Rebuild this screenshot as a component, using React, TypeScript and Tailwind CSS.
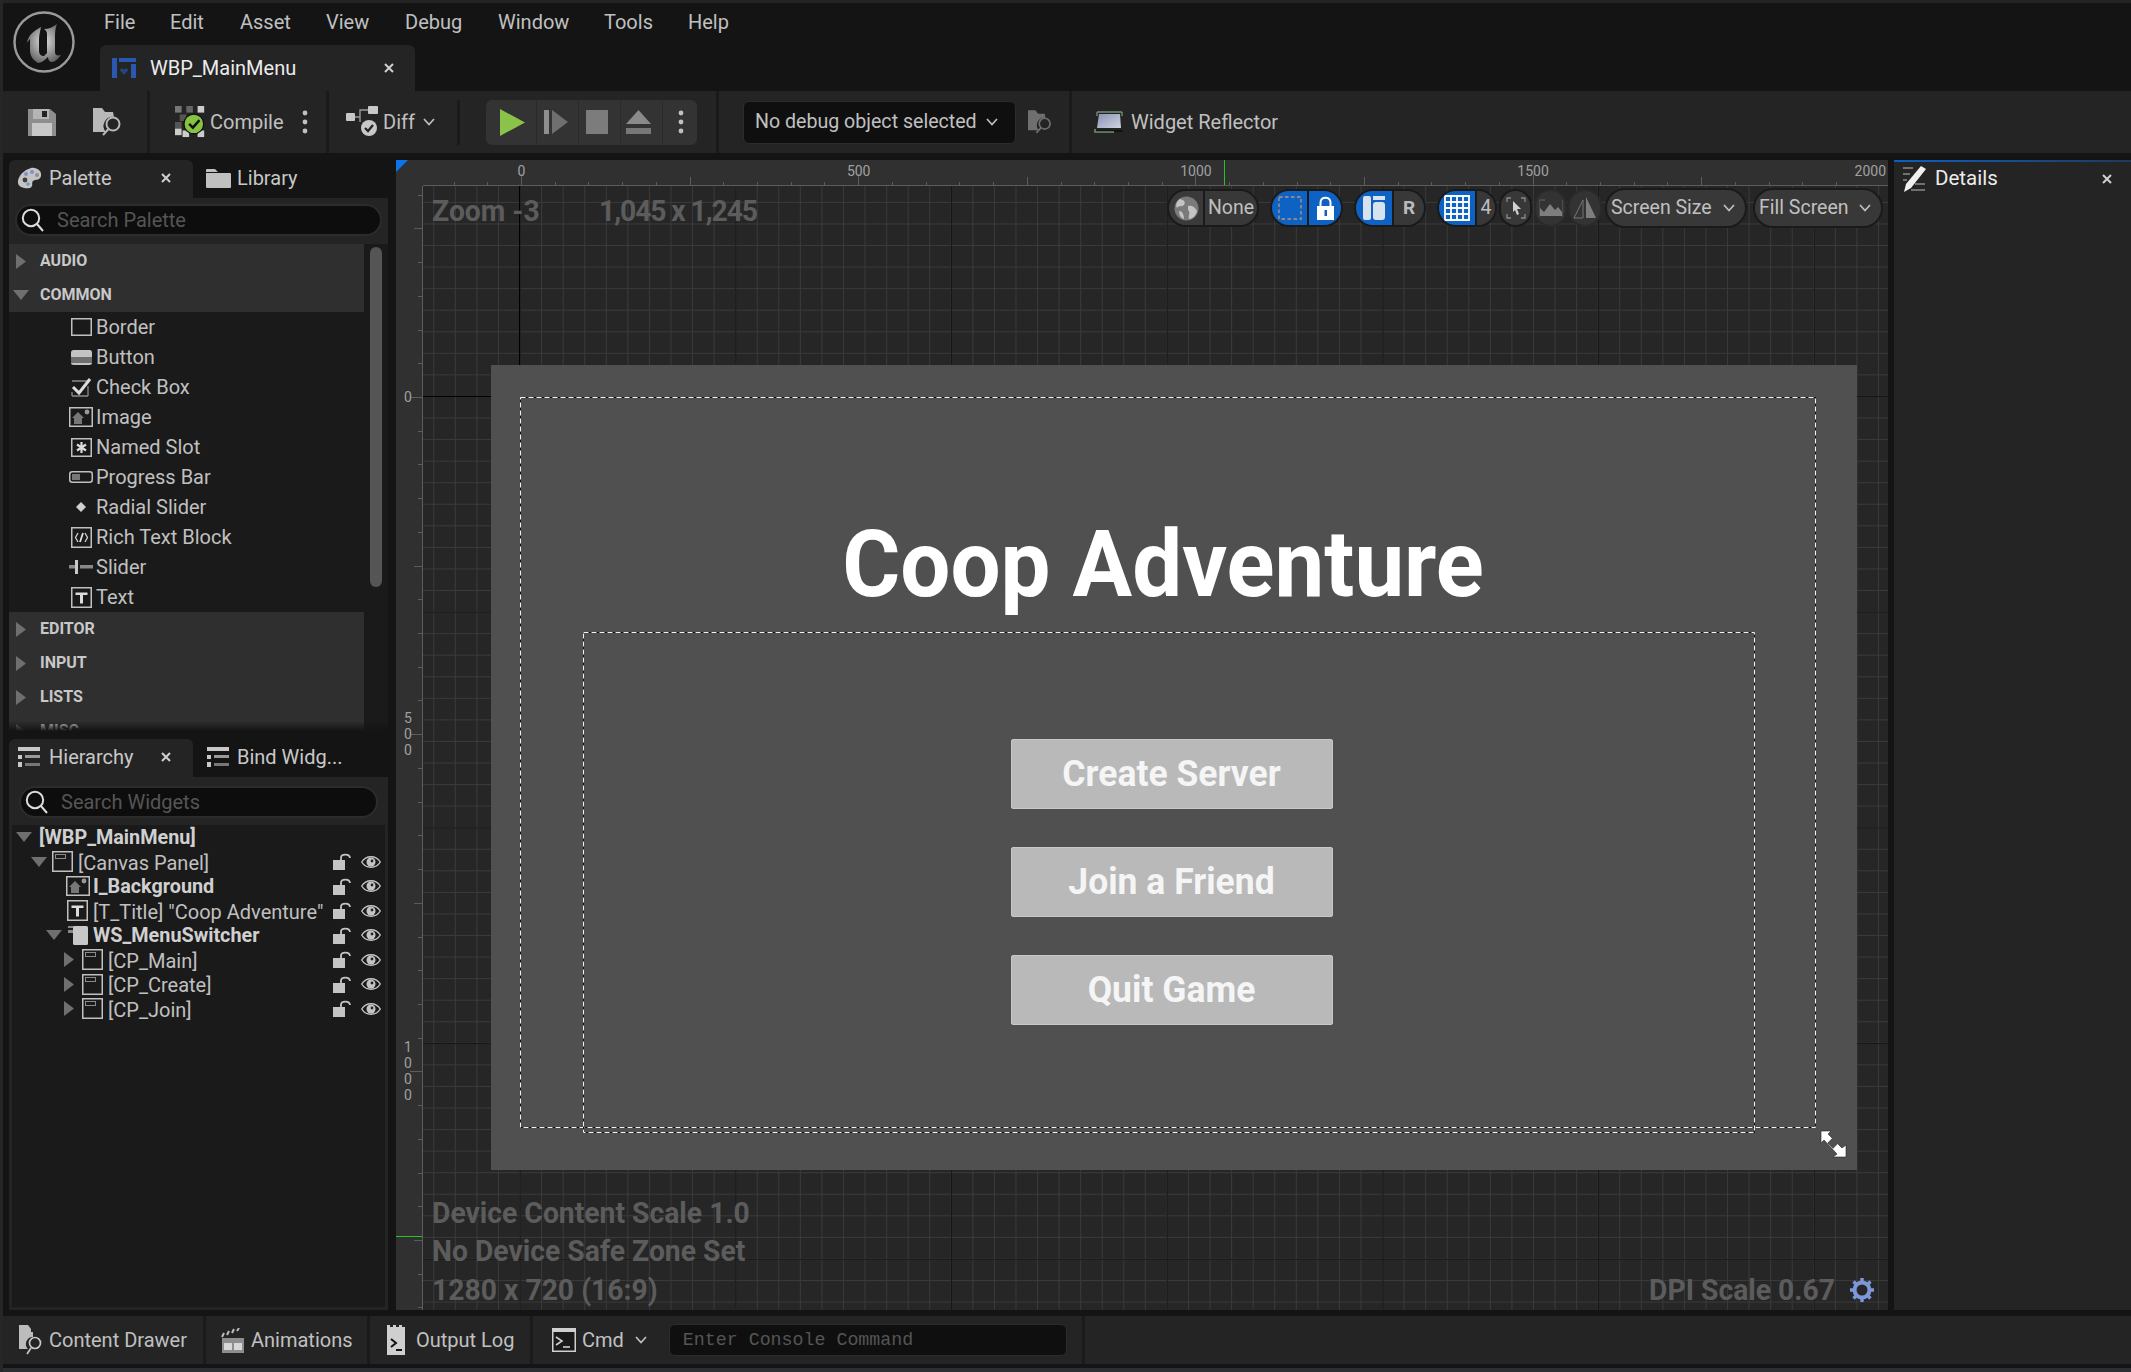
import React from 'react';

type P = { className?: string };
const G = '#c0c0c0';

const Chev = ({ className = '' }: P) => (
  <svg width="12" height="8" viewBox="0 0 12 8" className={className}><polyline points="1,1 6,6.5 11,1" fill="none" stroke="#c0c0c0" strokeWidth="1.7" /></svg>
);
const Close = ({ className = '' }: P) => (
  <svg width="10" height="10" viewBox="0 0 10 10" className={className}><path d="M1 1L9 9M9 1L1 9" stroke="#d0d0d0" strokeWidth="2" /></svg>
);
const Dots = ({ className = '' }: P) => (
  <svg width="6" height="24" viewBox="0 0 6 24" className={className}><circle cx="3" cy="3" r="2.4" fill="#c0c0c0" /><circle cx="3" cy="12" r="2.4" fill="#c0c0c0" /><circle cx="3" cy="21" r="2.4" fill="#c0c0c0" /></svg>
);
const Logo = () => (
  <svg width="64" height="64" viewBox="0 0 64 64">
    <defs><radialGradient id="lg" cx="0.5" cy="0.45" r="0.6"><stop offset="0" stopColor="#e0e0e0" /><stop offset="1" stopColor="#5f5f5f" /></radialGradient></defs>
    <circle cx="32" cy="32" r="29.5" fill="none" stroke="#9a9a9a" strokeWidth="2.4" />
    <path d="M15 33C16 25 22 21 29 17C28 22 27 25 27 30L27 41C27 44 29 46 32 46L35 43L35 24C35 22 34 20 32 19C37 19 41 17 45 14C43 19 43 23 43 28L43 42C43 45 45 46 49 45C46 49 43 52 40 52C38 52 36 50 36 47C33 50 29 53 26 53C21 50 18 46 18 40L18 29C17 30 16 31 15 33Z" fill="url(#lg)" />
  </svg>
);
const BlueprintIcon = () => (
  <svg width="24" height="20" viewBox="0 0 24 20">
    <path d="M0 0H5V20H0ZM7 0H24V4H7ZM19 6H24V20H19Z" fill="#2a57b0" />
    <path d="M12 17L8 12.5C8 10 11 10 12 12C13 10 16 10 16 12.5Z" fill="#24447f" />
  </svg>
);
const Save = () => (
  <svg width="28" height="27" viewBox="0 0 28 27">
    <path d="M0 0H22L28 5V27H0Z" fill="#8e8e8e" /><rect x="5" y="0" width="16" height="10" fill="#b5b5b5" /><rect x="14" y="2" width="5" height="6" fill="#222" /><rect x="4" y="14" width="20" height="13" fill="#c8c8c8" />
  </svg>
);
const FolderFind = ({ c = '#b8b8b8', w = 30, h = 28 }: { c?: string; w?: number; h?: number }) => (
  <svg width={w} height={h} viewBox="0 0 30 28">
    <path d="M0 0H9L12 4H20L21 9A9 9 0 0 0 13 24H0Z" fill={c} />
    <circle cx="20" cy="16" r="6.5" fill="none" stroke={c} strokeWidth="2" /><path d="M15.5 21L10 27" stroke={c} strokeWidth="2" />
  </svg>
);
const CompileIcon = () => (
  <svg width="32" height="32" viewBox="0 0 34 34">
    {[[0, 0, '#777'], [12, 0, '#666'], [24, 0, '#ccc'], [5, 9, '#555'], [0, 17, '#555'], [0, 24, '#ccc'], [8, 26, '#ccc'], [24, 26, '#ccc']].map(([x, y, c], i) => (
      <rect key={i} x={x as number} y={y as number} width="7" height="7" fill={c as string} />
    ))}
    <circle cx="20" cy="19" r="10.5" fill="#86c440" stroke="#111" strokeWidth="1.4" />
    <path d="M15 19L19 23L26 15" fill="none" stroke="#111" strokeWidth="2.6" />
  </svg>
);
const DiffIcon = () => (
  <svg width="34" height="32" viewBox="0 0 34 32">
    <rect x="0" y="7" width="9" height="8" rx="1" fill="#c8c8c8" /><rect x="22" y="0" width="10" height="8" rx="1" fill="#c8c8c8" />
    <path d="M9 11H14V4H22M14 11V16" fill="none" stroke="#999" strokeWidth="1.4" />
    <circle cx="23" cy="22" r="8" fill="#c8c8c8" /><path d="M19 22L22 25L27 19" fill="none" stroke="#222" strokeWidth="2.2" />
  </svg>
);
const Reflector = () => (
  <svg width="30" height="24" viewBox="0 0 30 24">
    <defs><linearGradient id="rf" x1="0" y1="0" x2="1" y2="1"><stop offset="0" stopColor="#8b93b8" /><stop offset="1" stopColor="#d0d4de" /></linearGradient></defs>
    <path d="M3 2H28" stroke="#6c9070" strokeWidth="1.6" /><path d="M3 2V6M28 2V6" stroke="#6c9070" strokeWidth="1.4" />
    <path d="M5 4H26L27 18H3Z" fill="url(#rf)" />
    <path d="M1 20H29L28 22H2Z" fill="#111" /><path d="M1 19V22H20" fill="none" stroke="#6c9070" strokeWidth="1.6" />
  </svg>
);
const PaletteIcon = () => (
  <svg width="25" height="22" viewBox="0 0 25 22">
    <path d="M14 1C20 0 25 4 24 9C23 14 18 12 16 14C14 16 17 19 13 21C7 22 0 20 1 14C2 8 7 3 14 1Z" fill="#c4c4c4" />
    <circle cx="8" cy="13" r="2.4" fill="#3d3d3d" /><circle cx="9" cy="7" r="2" fill="#7b93c9" /><circle cx="15" cy="5" r="2" fill="#7b93c9" /><circle cx="20" cy="8" r="2" fill="#8f8f8f" /><circle cx="11" cy="17" r="1.8" fill="#7b93c9" />
  </svg>
);
const Folder = () => (
  <svg width="25" height="19" viewBox="0 0 25 19"><path d="M0 1C0 0 1 0 1 0H9L12 3H0ZM0 4H24C25 4 25 5 25 5V18C25 19 24 19 24 19H1C0 19 0 18 0 18Z" fill="#c0c0c0" /></svg>
);
const ListIcon = () => (
  <svg width="22" height="20" viewBox="0 0 22 20">
    <rect x="0" y="0" width="22" height="4" fill="#c8c8c8" /><rect x="0" y="8" width="4" height="4" fill="#c8c8c8" /><rect x="7" y="8" width="15" height="3" fill="#999" /><rect x="0" y="15" width="4" height="5" fill="#c8c8c8" /><rect x="7" y="16" width="15" height="3" fill="#777" />
  </svg>
);
const Search = () => (
  <svg width="23" height="24" viewBox="0 0 23 24"><circle cx="10" cy="10" r="8.2" fill="none" stroke="#dcdcdc" strokeWidth="2" /><path d="M16 16L22 23" stroke="#dcdcdc" strokeWidth="2" /></svg>
);
const TriR = ({ c = '#6f6f6f', w = 10, h = 15 }: { c?: string; w?: number; h?: number }) => (
  <svg width={w} height={h} viewBox="0 0 10 15"><polygon points="0,0 10,7.5 0,15" fill={c} /></svg>
);
const TriD = ({ c = '#6f6f6f' }: { c?: string }) => (
  <svg width="16" height="10" viewBox="0 0 16 10"><polygon points="0,0 16,0 8,10" fill={c} /></svg>
);

const Box = ({ children, w = 21, h = 18 }: { children?: React.ReactNode; w?: number; h?: number }) => (
  <svg width={w} height={h} viewBox={`0 0 ${w} ${h}`}><rect x="0.75" y="0.75" width={w - 1.5} height={h - 1.5} fill="none" stroke={G} strokeWidth="1.5" />{children}</svg>
);
const BorderI = () => <Box />;
const ButtonI = () => (
  <svg width="21" height="15" viewBox="0 0 21 15"><rect width="21" height="15" rx="2.5" fill="#c4c4c4" /><rect x="0" y="7" width="21" height="6" fill="#6f6f6f" /></svg>
);
const CheckI = () => (
  <svg width="21" height="19" viewBox="0 0 21 19">
    <path d="M1 3H17M1 18H17M1 14V18M17 8V18" fill="none" stroke="#8a8a8a" strokeWidth="1.3" /><path d="M2 9L8 15L19 1" fill="none" stroke="#dcdcdc" strokeWidth="3" />
  </svg>
);
const ImageI = ({ s = 24 }: { s?: number }) => (
  <svg width={s} height={s - 4} viewBox="0 0 24 20">
    <rect x="0.75" y="0.75" width="22.5" height="18.5" fill="none" stroke={G} strokeWidth="1.5" />
    <path d="M3 11L9 5L15 11H13V17H5V11Z" fill="#777" /><circle cx="18" cy="5" r="2.4" fill="#999" />
  </svg>
);
const SlotI = () => (
  <Box w={21} h={19}><path d="M10.5 4V15M6 6.5L15 12.5M15 6.5L6 12.5" stroke="#dcdcdc" strokeWidth="2.2" /></Box>
);
const ProgressI = () => (
  <svg width="24" height="12" viewBox="0 0 24 12"><rect x="0.75" y="0.75" width="22.5" height="10.5" rx="2.5" fill="none" stroke={G} strokeWidth="1.5" /><rect x="3" y="3" width="8" height="6" fill="#777" /></svg>
);
const RadialI = () => <svg width="10" height="10" viewBox="0 0 10 10"><polygon points="5,0 10,5 5,10 0,5" fill="#d0d0d0" /></svg>;
const RichI = () => (
  <Box w={21} h={21}><path d="M7 6L4.5 10.5L7 15M14 6L16.5 10.5L14 15" fill="none" stroke="#d0d0d0" strokeWidth="1.3" /><path d="M9 15L12 6" stroke="#e0e0e0" strokeWidth="1.8" /></Box>
);
const SliderI = () => (
  <svg width="24" height="14" viewBox="0 0 24 14"><rect x="0" y="5" width="6" height="3.5" fill="#888" /><rect x="6" y="0" width="3" height="14" fill="#c8c8c8" /><rect x="11" y="5" width="13" height="3.5" fill="#888" /></svg>
);
const TextI = ({ w = 21, h = 21 }: { w?: number; h?: number }) => (
  <Box w={w} h={h}><path d={`M${w / 2 - 6} ${h / 2 - 5}H${w / 2 + 6}V${h / 2 - 2.5}H${w / 2 + 1.5}V${h / 2 + 6}H${w / 2 - 1.5}V${h / 2 - 2.5}H${w / 2 - 6}Z`} fill="#dcdcdc" /></Box>
);
const PanelI = () => (
  <Box w={21} h={21}><rect x="3.5" y="3.5" width="10" height="4" fill="none" stroke="#8a8a8a" strokeWidth="1" /></Box>
);
const SwitcherI = () => (
  <svg width="20" height="19" viewBox="0 0 20 19"><rect x="0" y="4" width="6" height="3" fill="#888" /><rect x="0" y="0" width="6" height="2" fill="#888" /><rect x="5" y="0" width="15" height="19" rx="1.5" fill="#c8c8c8" /></svg>
);
const Lock = () => (
  <svg width="18" height="17" viewBox="0 0 18 17"><rect x="0" y="7" width="12" height="10" fill="#c4c4c4" /><path d="M8 7V4.5C8 1 16.5 0 17 5" fill="none" stroke="#c4c4c4" strokeWidth="1.8" /></svg>
);
const Eye = () => (
  <svg width="20" height="14" viewBox="0 0 20 14"><path d="M0.7 7C5 0 15 0 19.3 7C15 14 5 14 0.7 7Z" fill="none" stroke="#c4c4c4" strokeWidth="1.4" /><circle cx="10" cy="7" r="4.5" fill="#c4c4c4" /><circle cx="11" cy="6" r="1.4" fill="#222" /></svg>
);
const Globe = () => (
  <svg width="25" height="25" viewBox="0 0 25 25"><circle cx="12.5" cy="12.5" r="12" fill="#7a7a7a" /><path d="M6 3C10 4 12 6 10 9C8 11 5 9 3 12C1 9 3 5 6 3ZM14 10C18 9 21 11 23 15C22 20 18 23 15 23C14 19 17 17 14 14ZM5 15C8 15 10 18 10 23C7 22 5 19 5 15Z" fill="#c4c4c4" /></svg>
);
const SafeZone = () => (
  <svg width="24" height="24" viewBox="0 0 24 24"><rect x="1" y="1" width="22" height="22" fill="none" stroke="#8a8a8a" strokeWidth="1.8" strokeDasharray="3.5 2.5" /></svg>
);
const LockClosed = () => (
  <svg width="17" height="24" viewBox="0 0 17 24"><path d="M3.5 11V6.5C3.5 0 13.5 0 13.5 6.5V11" fill="none" stroke="#fff" strokeWidth="2" /><rect x="0" y="10" width="17" height="14" fill="#fff" /><rect x="7.5" y="14" width="2.5" height="6" fill="#0d62c4" /></svg>
);
const Respect = () => (
  <svg width="22" height="24" viewBox="0 0 22 24"><rect x="0" y="0" width="8" height="24" rx="2" fill="#d8e2ee" /><rect x="10" y="0" width="12" height="4" fill="#d8e2ee" /><rect x="10" y="6" width="12" height="18" rx="3" fill="#d8e2ee" /></svg>
);
const GridI = () => (
  <svg width="26" height="26" viewBox="0 0 26 26"><path d="M1 1H25V25H1ZM1 7H25M1 13H25M1 19H25M7 1V25M13 1V25M19 1V25" fill="none" stroke="#fff" strokeWidth="1.8" /></svg>
);
const Cursor = () => (
  <svg width="20" height="22" viewBox="0 0 20 22"><path d="M1 5V1H5M15 1H19V5M1 17V21H5M15 21H19V17" fill="none" stroke="#8a8a8a" strokeWidth="1.3" /><path d="M7 4L15 12H11L13 17L11 18L9 13L7 15Z" fill="#d0d0d0" /></svg>
);
const Mountain = () => (
  <svg width="24" height="18" viewBox="0 0 24 18"><path d="M0 1V18M24 1V18" stroke="#666" strokeWidth="1" /><path d="M1 17V9L5 13L11 5L16 11L19 8L23 13V17Z" fill="#7e7e7e" /><path d="M1 1H6" stroke="#666" /></svg>
);
const Mirror = () => (
  <svg width="24" height="22" viewBox="0 0 24 22"><path d="M10 3V21H1Z" fill="none" stroke="#777" strokeWidth="1" /><path d="M13 0V21H23Z" fill="#7e7e7e" /></svg>
);
const Expand = () => (
  <svg width="27" height="28" viewBox="0 0 27 28">
    <path d="M1 1H11L8 4L22 18L26 15V27H13L17 24L4 10L1 13Z" fill="#fff" stroke="#222" strokeWidth="0.6" />
    <rect x="9" y="9" width="8" height="8" transform="rotate(45 13 13)" fill="#505050" />
  </svg>
);
const Gear = () => (
  <svg width="24" height="24" viewBox="0 0 24 24"><circle cx="12" cy="12" r="7.5" fill="none" stroke="#7e97da" strokeWidth="4" /><path d="M12 0V5M12 19V24M0 12H5M19 12H24M3.5 3.5L7 7M17 17L20.5 20.5M20.5 3.5L17 7M7 17L3.5 20.5" stroke="#7e97da" strokeWidth="3.4" /></svg>
);
const DetailsI = () => (
  <svg width="24" height="26" viewBox="0 0 24 26">
    <path d="M0 2H10M0 8H7M0 14H4M12 18H22M8 24H22" stroke="#8a8a8a" strokeWidth="1.5" /><path d="M18 0L23 3L8 22L1 26L3 18Z" fill="#f0f0f0" />
  </svg>
);
const DrawerI = () => (
  <svg width="24" height="30" viewBox="0 0 24 30">
    <path d="M0 0H9L12 4V7H14V12A7 7 0 0 0 9 24H0ZM0 5H14" fill="#bcbcbc" /><circle cx="16" cy="18" r="5.5" fill="none" stroke="#c8c8c8" strokeWidth="1.7" /><path d="M12 23L8 29" stroke="#c8c8c8" strokeWidth="1.7" />
  </svg>
);
const ClapI = () => (
  <svg width="24" height="25" viewBox="0 0 24 25">
    <path d="M1 9L3 5M6 7L8 3M11 5L13 1M16 3L18 0" stroke="#bcbcbc" strokeWidth="2" /><rect x="1" y="10" width="22" height="15" fill="#8e8e8e" /><rect x="3" y="15" width="8" height="7" fill="#d8d8d8" /><rect x="13" y="15" width="8" height="7" fill="#d8d8d8" />
  </svg>
);
const LogI = () => (
  <svg width="18" height="30" viewBox="0 0 18 30">
    <path d="M0 0H3V2H6V0H9V2H12V0H15V2H18V30H0Z" fill="#cfcfcf" /><path d="M4 14L9 18L4 22" fill="none" stroke="#111" strokeWidth="2" /><path d="M9 25H15" stroke="#111" strokeWidth="2" />
  </svg>
);
const TermI = () => (
  <svg width="24" height="24" viewBox="0 0 24 24">
    <rect x="0.75" y="0.75" width="22.5" height="22.5" fill="#1a1a1a" stroke="#cfcfcf" strokeWidth="1.5" /><rect x="0" y="0" width="24" height="4" fill="#cfcfcf" /><path d="M4 9L10 13L4 17" fill="none" stroke="#cfcfcf" strokeWidth="1.6" /><path d="M11 19H18" stroke="#cfcfcf" strokeWidth="1.6" />
  </svg>
);

const Sep = () => <div className="w-[3px] h-full bg-[#1a1a1a] shrink-0" />;

const Dashed = ({ className = '', children }: { className?: string; children?: React.ReactNode }) => (
  <div className={className}>
    <svg className="absolute inset-0 w-full h-full pointer-events-none overflow-visible">
      <rect x="0.5" y="0.5" width="100%" height="100%" fill="none" stroke="#111" strokeWidth="1" />
      <rect x="0.5" y="0.5" width="100%" height="100%" fill="none" stroke="#f0f0f0" strokeWidth="1" strokeDasharray="5 3" />
    </svg>
    {children}
  </div>
);

const Tab = ({ icon, label, close }: { icon: React.ReactNode; label: string; close?: boolean }) => (
  <div className={`h-full flex items-center rounded-t-md pb-[2px] ${close ? 'bg-[#242424] w-[184px]' : 'w-[195px] pl-[11px]'}`}>
    <div className={`flex items-center justify-center w-[28px] ${close ? 'ml-[6px] mr-[6px]' : 'mr-[5px]'}`}>{icon}</div>
    <span className="text-[20px] text-[#c8c8c8] whitespace-nowrap leading-none">{label}</span>
    {close && <Close className="ml-auto mr-[22px]" />}
  </div>
);

const SearchBox = ({ text, className }: { text: string; className: string }) => (
  <div className={`h-[32px] rounded-full bg-[#0d0d0d] border-2 border-[#2c2c2c] flex items-center ${className}`}>
    <span className="ml-[4px] flex"><Search /></span>
    <span className="ml-[13px] text-[20px] text-[#555] leading-none whitespace-nowrap">{text}</span>
  </div>
);

const Category = ({ label, open }: { label: string; open?: boolean }) => (
  <div className="h-[34px] flex items-center bg-[#2f2f2f] w-[355px]">
    <div className="w-[31px] flex justify-center pr-[7px]">{open ? <TriD /> : <TriR />}</div>
    <span className="text-[16px] font-bold text-[#c8c8c8] leading-none">{label}</span>
  </div>
);

const PaletteItem = ({ icon, label }: { icon: React.ReactNode; label: string }) => (
  <div className="h-[30px] flex items-center pl-[59px]">
    <div className="w-[26px] h-[24px] flex items-center justify-center">{icon}</div>
    <span className="ml-[2px] text-[20px] text-[#c0c0c0] leading-none">{label}</span>
  </div>
);

const paletteItems: [React.ReactNode, string][] = [
  [<BorderI />, 'Border'], [<ButtonI />, 'Button'], [<CheckI />, 'Check Box'], [<ImageI />, 'Image'], [<SlotI />, 'Named Slot'],
  [<ProgressI />, 'Progress Bar'], [<RadialI />, 'Radial Slider'], [<RichI />, 'Rich Text Block'], [<SliderI />, 'Slider'], [<TextI />, 'Text'],
];

const TreeRow = ({ lead, label, bold, controls = true, labelClass }: { lead: React.ReactNode; label: string; bold?: boolean; controls?: boolean; labelClass: string }) => (
  <div className="h-[24.5px] flex items-center">
    {lead}
    <span className={`leading-none whitespace-nowrap translate-y-[1px] ${labelClass} ${bold ? 'font-bold text-[19.8px] text-[#d0d0d0]' : 'text-[20px] text-[#c0c0c0]'}`}>{label}</span>
    {controls && (
      <div className="ml-auto flex items-center gap-[10px] pr-[4px]"><Lock /><Eye /></div>
    )}
  </div>
);

const RulerTop = () => {
  const ticks = Array.from({ length: 42 }, (_, i) => i - 2);
  return (
    <div className="relative bg-[#303030] border-b border-[#5c5c5c] overflow-hidden">
      {ticks.map((i) => {
        const h = i % 10 === 0 ? 11 : i % 5 === 0 ? 8 : 3;
        return <div key={i} className="absolute bottom-0 w-px bg-[#5c5c5c]" style={{ left: 98 + i * 33.72, height: h }} />;
      })}
      {[0, 500, 1000, 1500, 2000].map((v, i) => (
        <span key={v} className="absolute top-[3px] text-[14px] leading-[16px] text-[#a0a0a0] -translate-x-1/2" style={{ left: 98.5 + i * 337.2 }}>{v}</span>
      ))}
      <div className="absolute top-0 bottom-0 left-[801px] w-px bg-[#22c522]" />
    </div>
  );
};

const RulerLeft = () => {
  const ticks = Array.from({ length: 36 }, (_, i) => i - 6);
  return (
    <div className="relative bg-[#303030] border-r border-[#5c5c5c] overflow-hidden">
      {ticks.map((i) => {
        const w = i % 10 === 0 ? 12 : i % 5 === 0 ? 8 : 4;
        return <div key={i} className="absolute right-0 h-px bg-[#5c5c5c]" style={{ top: 211 + i * 33.72, width: w }} />;
      })}
      {[['0'], ['5', '0', '0'], ['1', '0', '0', '0']].map((digits, i) => (
        <div key={i} className="absolute left-[8px] flex flex-col text-[14px] leading-[16px] text-[#a0a0a0] items-center" style={{ top: 211 + i * 337.2 - (digits.length * 16) / 2 }}>
          {digits.map((d, j) => <span key={j}>{d}</span>)}
        </div>
      ))}
      <div className="absolute left-0 right-0 top-[1050px] h-px bg-[#22c522]" />
    </div>
  );
};

const Pill = ({ children, className = '' }: { children: React.ReactNode; className?: string }) => (
  <div className={`h-[38px] rounded-full border-2 border-[#1a1a1a] overflow-hidden flex shrink-0 ${className}`}>{children}</div>
);

const CanvasToolbar = () => (
  <div className="absolute left-[744px] top-[2px] h-[40px] flex items-center">
    <Pill className="w-[92px]">
      <div className="w-[36px] bg-[#3a3a3a] flex items-center justify-center border-r-2 border-[#1a1a1a]"><Globe /></div>
      <div className="flex-1 bg-[#383838] flex items-center justify-center text-[19.5px] text-[#c0c0c0]">None</div>
    </Pill>
    <Pill className="w-[73px] ml-[11px]">
      <div className="w-[37px] bg-[#0d62c4] flex items-center justify-center border-r-2 border-[#1a1a1a]"><SafeZone /></div>
      <div className="flex-1 bg-[#0d62c4] flex items-center justify-center"><LockClosed /></div>
    </Pill>
    <Pill className="w-[72px] ml-[11px]">
      <div className="w-[38px] bg-[#0d62c4] flex items-center justify-center border-r-2 border-[#1a1a1a]"><Respect /></div>
      <div className="flex-1 bg-[#383838] flex items-center justify-center text-[19px] font-bold text-[#bbb]">R</div>
    </Pill>
    <Pill className="w-[60px] ml-[11px]">
      <div className="w-[38px] bg-[#0d62c4] flex items-center justify-center border-r-2 border-[#1a1a1a]"><GridI /></div>
      <div className="flex-1 bg-[#383838] flex items-center justify-center text-[19.5px] text-[#c0c0c0]">4</div>
    </Pill>
    <Pill className="w-[33px] ml-[2px] bg-[#383838] items-center justify-center"><Cursor /></Pill>
    <Pill className="w-[33px] ml-[2px] bg-[#333] border-[#2a2a2a] items-center justify-center"><Mountain /></Pill>
    <Pill className="w-[34px] ml-[1px] bg-[#333] border-[#2a2a2a] items-center justify-center"><Mirror /></Pill>
    <div className="w-[142px] h-[40px] ml-[3px] rounded-full border-2 border-[#1a1a1a] bg-[#383838] flex items-center justify-between pl-[4px] pr-[10px] text-[19.5px] text-[#c0c0c0]">Screen Size<Chev /></div>
    <div className="w-[130px] h-[40px] ml-[6px] rounded-full border-2 border-[#1a1a1a] bg-[#383838] flex items-center justify-between pl-[4px] pr-[10px] text-[19.5px] text-[#c0c0c0]">Fill Screen<Chev /></div>
  </div>
);

const MenuButton = ({ label }: { label: string }) => (
  <div className="h-[70px] w-[322px] rounded-[2px] bg-[#b9b9b9] border border-[#c8c8c8] flex items-center justify-center text-[35.5px] font-bold text-[#f5f5f5] leading-none"><span className="scale-y-[1.05]">{label}</span></div>
);

const Canvas = () => (
  <div className="w-[1492px] h-full grid grid-cols-[27px_1fr] grid-rows-[26px_1fr] overflow-hidden">
    <div className="relative bg-[#303030]">
      <svg width="12" height="12" viewBox="0 0 12 12" className="absolute left-0 top-0"><polygon points="0,0 12,0 0,12" fill="#0a74e8" /></svg>
    </div>
    <RulerTop />
    <RulerLeft />
    <div className="relative overflow-hidden bg-[#262626] [background-image:linear-gradient(to_right,#161616_1px,transparent_1px),linear-gradient(to_bottom,#161616_1px,transparent_1px),linear-gradient(to_right,#3a3a3a_1px,transparent_1px),linear-gradient(to_bottom,#3a3a3a_1px,transparent_1px)] [background-size:215.7px_215.7px,215.7px_215.7px,21.57px_21.57px,21.57px_21.57px] [background-position:96.6px_0,0_210px,10.3px_0,0_15.9px]">
      <div className="absolute left-[96px] top-0 h-[179px] w-px bg-black" />
      <div className="absolute left-0 top-[210px] w-[68px] h-px bg-black" />

      <div className="absolute left-[9px] top-[7px] h-[36px] text-[28.3px] scale-y-[1.07] origin-left leading-[36px] font-bold text-[#5c5c5c] whitespace-nowrap">Zoom -3</div>
      <div className="absolute left-[176px] top-[7px] h-[36px] text-[28.3px] scale-y-[1.07] origin-left tracking-[-1.1px] leading-[36px] font-bold text-[#5c5c5c] whitespace-nowrap">1,045 x 1,245</div>

      <CanvasToolbar />

      <div className="absolute left-[68px] top-[179px] w-[1366px] h-[805px] bg-[#505050]">
        <Dashed className="absolute left-[29px] top-[32px] w-[1295px] h-[730px]" />
        <h1 className="absolute left-0 right-[22px] top-[145px] text-center text-[88.8px] scale-y-[1.05] leading-[110px] font-bold text-white whitespace-nowrap">Coop Adventure</h1>
        <Dashed className="absolute left-[92px] top-[267px] w-[1171px] h-[500px]">
          <div className="pt-[107px] pl-[6px] flex flex-col items-center gap-[38px]">
            <MenuButton label="Create Server" />
            <MenuButton label="Join a Friend" />
            <MenuButton label="Quit Game" />
          </div>
        </Dashed>
        <div className="absolute left-[1329px] top-[765px] flex"><Expand /></div>
      </div>

      <div className="absolute left-[9px] bottom-[1px] flex flex-col text-[28.3px] leading-[38.5px] font-bold text-[#5c5c5c] whitespace-nowrap">
        <div className="scale-y-[1.07] origin-left">Device Content Scale 1.0</div>
        <div className="scale-y-[1.07] origin-left">No Device Safe Zone Set</div>
        <div className="scale-y-[1.07] origin-left">1280 x 720 (16:9)</div>
      </div>
      <div className="absolute right-[14px] bottom-[1px] flex items-center gap-[15px] text-[28.3px] leading-[38.5px] font-bold text-[#5c5c5c] whitespace-nowrap">
        <span className="scale-y-[1.07]">DPI Scale 0.67</span><Gear />
      </div>
    </div>
  </div>
);

export default function App() {
  return (
    <div className="w-[2131px] h-[1372px] bg-[#141414] flex flex-col overflow-hidden font-['Roboto',sans-serif] border-l-[3px] border-[#262626]">
      {/* title area */}
      <div className="h-[91px] shrink-0 flex border-t-[3px] border-[#242424]">
        <div className="w-[97px] pl-[9px] pt-[7px]"><Logo /></div>
        <div className="flex flex-col flex-1">
          <div className="h-[37px] flex items-center pl-[4px] text-[20px] text-[#c0c0c0]">
            <span className="w-[66px]">File</span><span className="w-[70px]">Edit</span><span className="w-[86px]">Asset</span><span className="w-[79px]">View</span><span className="w-[93px]">Debug</span><span className="w-[106px]">Window</span><span className="w-[84px]">Tools</span><span>Help</span>
          </div>
          <div className="mt-auto h-[46px] w-[315px] bg-[#242424] rounded-t-md flex items-center pl-[12px]">
            <BlueprintIcon />
            <span className="ml-[14px] text-[20px] text-[#ececec] leading-none">WBP_MainMenu</span>
            <Close className="ml-auto mr-[21px]" />
          </div>
        </div>
      </div>

      {/* toolbar */}
      <div className="h-[62px] shrink-0 bg-[#242424] flex items-center">
        <div className="w-[144px] flex items-center pl-[25px]"><Save /><span className="ml-[37px] flex"><FolderFind /></span></div>
        <Sep />
        <div className="w-[176px] flex items-center pl-[25px]">
          <CompileIcon />
          <span className="ml-[3px] text-[20px] text-[#c0c0c0]">Compile</span>
          <Dots className="ml-[18px]" />
        </div>
        <Sep />
        <div className="w-[128px] flex items-center pl-[17px]">
          <DiffIcon />
          <span className="ml-[3px] text-[20px] text-[#c0c0c0]">Diff</span>
          <Chev className="ml-[8px]" />
        </div>
        <div className="w-[3px] h-[45px] bg-[#1a1a1a] shrink-0" />
        <div className="ml-[26px] w-[211px] h-[45px] rounded-md bg-[#333] flex items-center">
          <div className="w-[51px] h-full pl-[3px] flex items-center justify-center border-r border-[#2a2a2a]"><svg width="25" height="27" viewBox="0 0 25 27"><polygon points="0,0 25,13.5 0,27" fill="#8bc34a" /></svg></div>
          <div className="w-[42px] h-full pr-[3px] flex items-center justify-center border-r border-[#2a2a2a]"><svg width="24" height="24" viewBox="0 0 24 24"><rect width="5" height="24" fill="#8e8e8e" /><polygon points="8,0 24,12 8,24" fill="#6f6f6f" /></svg></div>
          <div className="w-[42px] h-full pr-[5px] flex items-center justify-center border-r border-[#2a2a2a]"><div className="w-[22px] h-[24px] bg-[#7c7c7c]" /></div>
          <div className="w-[42px] h-full pr-[6px] flex items-center justify-center border-r border-[#2a2a2a]"><svg width="25" height="24" viewBox="0 0 25 24"><polygon points="12.5,0 25,14 0,14" fill="#8a8a8a" /><rect y="18" width="25" height="6" fill="#777" /></svg></div>
          <div className="flex-1 flex justify-center pl-[2px]"><Dots /></div>
        </div>
        <div className="ml-[19px] w-[3px] h-full bg-[#1a1a1a] shrink-0" />
        <div className="ml-[24px] w-[273px] h-[43px] rounded-md bg-[#0f0f0f] border border-[#2c2c2c] flex items-center pl-[11px] text-[19.6px] text-[#c0c0c0] whitespace-nowrap">
          No debug object selected<Chev className="ml-[9px]" />
        </div>
        <span className="ml-[12px] flex"><FolderFind c="#6f6f6f" w={25} h={24} /></span>
        <div className="ml-[16px] w-[3px] h-full bg-[#1a1a1a] shrink-0" />
        <span className="ml-[22px] flex"><Reflector /></span>
        <span className="ml-[7px] text-[20px] text-[#c0c0c0]">Widget Reflector</span>
      </div>

      {/* main */}
      <div className="mt-[7px] h-[1150px] shrink-0 flex">
        {/* left column */}
        <div className="w-[379px] ml-[6px] shrink-0 flex flex-col">
          <div className="h-[38px] flex shrink-0">
            <Tab icon={<PaletteIcon />} label="Palette" close />
            <Tab icon={<Folder />} label="Library" />
          </div>
          <div className="h-[46px] bg-[#242424] flex items-center pl-[6px] pb-[2px] shrink-0"><SearchBox text="Search Palette" className="w-[367px]" /></div>
          <div className="relative h-[487px] shrink-0 bg-[#1a1a1a] overflow-hidden">
            <Category label="AUDIO" />
            <Category label="COMMON" open />
            {paletteItems.map(([icon, label]) => <PaletteItem key={label} icon={icon} label={label} />)}
            <Category label="EDITOR" />
            <Category label="INPUT" />
            <Category label="LISTS" />
            <Category label="MISC" />
            <div className="absolute right-[6px] top-[3px] h-[340px] w-[12px] rounded-full bg-[#555]" />
            <div className="absolute left-0 right-0 bottom-0 h-[10px] bg-gradient-to-b from-transparent to-[#141414]" />
          </div>
          <div className="h-[8px] shrink-0" />
          <div className="h-[38px] flex shrink-0">
            <Tab icon={<ListIcon />} label="Hierarchy" close />
            <Tab icon={<ListIcon />} label="Bind Widg..." />
          </div>
          <div className="flex-1 bg-[#242424] px-[3px] pb-[3px] flex flex-col min-h-0">
            <div className="h-[48px] flex items-center pl-[7px] pt-[2px] shrink-0"><SearchBox text="Search Widgets" className="w-[359px]" /></div>
            <div className="flex-1 bg-[#1a1a1a]">
              <TreeRow controls={false} bold label="[WBP_MainMenu]" labelClass="ml-[7px]" lead={<span className="ml-[4px] flex"><TriD /></span>} />
              <TreeRow label="[Canvas Panel]" labelClass="ml-[5px]" lead={<><span className="ml-[19px] flex"><TriD /></span><span className="ml-[5px] flex"><PanelI /></span></>} />
              <TreeRow bold label="I_Background" labelClass="ml-[3px]" lead={<span className="ml-[54px] flex"><ImageI /></span>} />
              <TreeRow label={'[T_Title] "Coop Adventure"'} labelClass="ml-[5px]" lead={<span className="ml-[55px] flex"><TextI /></span>} />
              <TreeRow bold label="WS_MenuSwitcher" labelClass="ml-[5px]" lead={<><span className="ml-[34px] flex"><TriD /></span><span className="ml-[6px] flex"><SwitcherI /></span></>} />
              {['[CP_Main]', '[CP_Create]', '[CP_Join]'].map((l) => (
                <TreeRow key={l} label={l} labelClass="ml-[5px]" lead={<><span className="ml-[52px] flex"><TriR /></span><span className="ml-[8px] flex"><PanelI /></span></>} />
              ))}
            </div>
          </div>
        </div>

        <div className="w-[8px] shrink-0" />
        <Canvas />
        <div className="w-[6px] shrink-0" />

        {/* details */}
        <div className="flex-1 bg-[#242424] flex flex-col">
          <div className="h-[2px] bg-gradient-to-r from-[#0a5fc0] to-[#1d3a5c]" />
          <div className="h-[33px] flex items-center pl-[9px]">
            <DetailsI />
            <span className="ml-[8px] text-[20.5px] text-[#ececec] leading-none">Details</span>
            <Close className="ml-auto mr-[19px]" />
          </div>
        </div>
      </div>

      {/* status bar */}
      <div className="mt-[6px] h-[48px] shrink-0 bg-[#242424] flex items-center">
        <div className="w-[200px] flex items-center pl-[16px]"><DrawerI /><span className="ml-[6px] text-[20px] text-[#c0c0c0]">Content Drawer</span></div>
        <Sep />
        <div className="w-[161px] flex items-center pl-[15px]"><ClapI /><span className="ml-[6px] text-[20px] text-[#c0c0c0]">Animations</span></div>
        <Sep />
        <div className="w-[160px] flex items-center pl-[17px]"><LogI /><span className="ml-[11px] text-[20px] text-[#c0c0c0]">Output Log</span></div>
        <Sep />
        <div className="flex items-center pl-[19px]">
          <TermI />
          <span className="ml-[6px] text-[20px] text-[#c0c0c0]">Cmd</span>
          <Chev className="ml-[11px]" />
        </div>
        <div className="ml-[22px] w-[398px] h-[32px] rounded-md bg-[#0f0f0f] border border-[#2c2c2c] flex items-center pl-[13px] pt-[2px] font-['Liberation_Mono',monospace] text-[18.3px] text-[#555]">Enter Console Command</div>
        <div className="ml-[15px] w-[3px] h-full bg-[#1a1a1a]" />
      </div>
      <div className="flex-1 flex flex-col"><div className="h-[4px]" /><div className="h-[4px] bg-[#2b2e33]" /></div>
    </div>
  );
}
